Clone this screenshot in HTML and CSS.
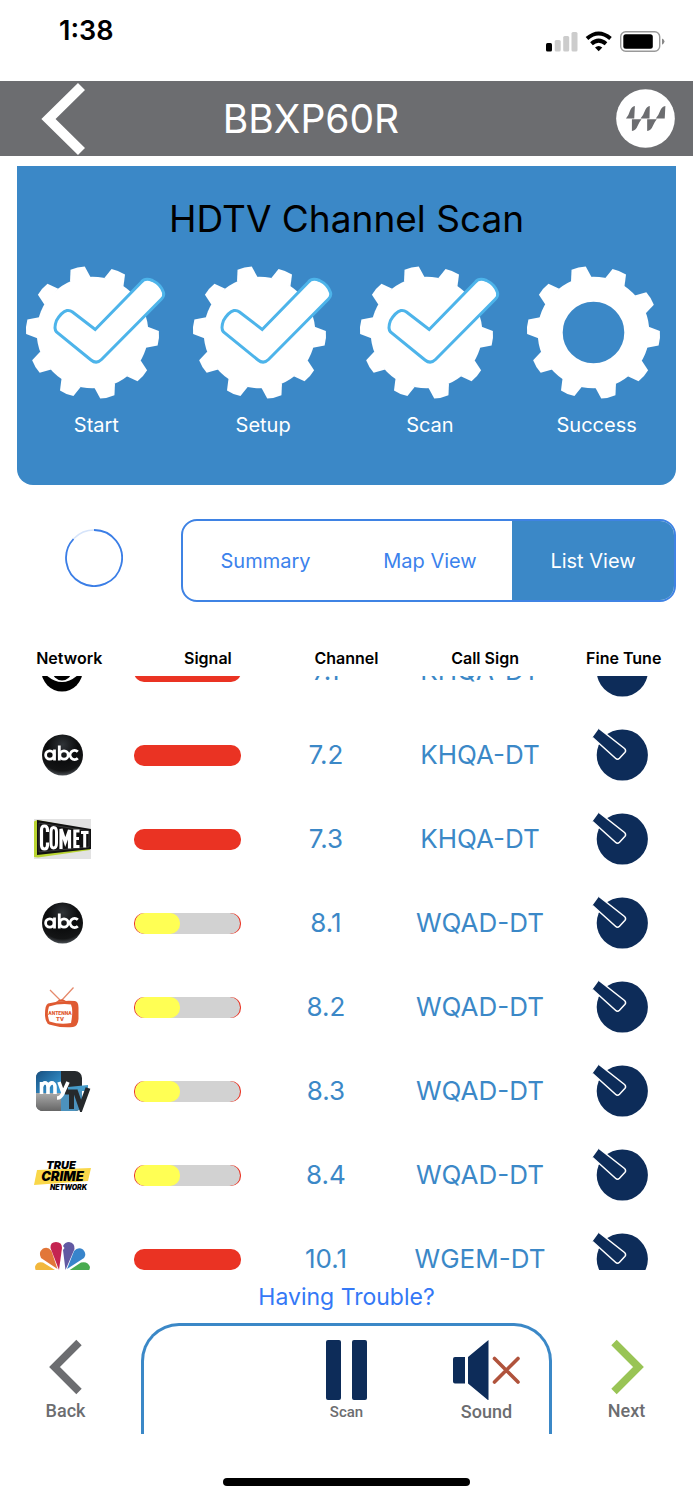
FILE: index.html
```html
<!DOCTYPE html>
<html lang="en">
<head>
<meta charset="utf-8">
<meta name="viewport" content="width=device-width, initial-scale=1">
<title>HDTV Channel Scan</title>
<link rel="stylesheet" href="styles.css">
</head>
<body>
<svg class="defs" aria-hidden="true">
  <defs>
    <path id="tooth" d="M-10.5 -54.5 L-7.300 -66 Q0 -67.400 7.300 -66 L10.5 -54.5Z"/>
    <g id="teeth" fill="#fff">
      <use href="#tooth" transform="rotate(-13)"/><use href="#tooth" transform="rotate(23)"/>
      <use href="#tooth" transform="rotate(59)"/><use href="#tooth" transform="rotate(95)"/>
      <use href="#tooth" transform="rotate(131)"/><use href="#tooth" transform="rotate(167)"/>
      <use href="#tooth" transform="rotate(203)"/><use href="#tooth" transform="rotate(239)"/>
      <use href="#tooth" transform="rotate(275)"/><use href="#tooth" transform="rotate(311)"/>
    </g>
    <symbol id="gear-open" viewBox="-70.500 -69.500 148 140">
      <use href="#teeth"/><circle r="43.300" fill="none" stroke="#fff" stroke-width="25"/>
    </symbol>
    <symbol id="gear-done" viewBox="-70.500 -69.500 148 140">
      <use href="#teeth"/><circle r="55.800" fill="#fff"/>
      <path d="M2.7 -3 L49 -50.5 Q52.500 -55 60 -52 Q68.500 -48 71 -40 Q72 -36.500 69 -33.500 L9 27 Q4 32 -1.500 27.500 L-36 -.500 Q-39 -4 -36 -12 Q-31 -20.500 -25.500 -22 Q-22.500 -22.500 -20 -20.500Z" fill="#fff" stroke="#4db4ea" stroke-width="3"/>
    </symbol>
    <symbol id="knob" viewBox="0 0 56 54">
      <circle cx="30.300" cy="27" r="25.600" fill="#0d2c59"/>
      <path d="M7 .500 L32.500 20.500 Q34.500 22.500 32.800 24.500 L27.500 30.300 Q25.500 32.300 23.500 30.300 L.500 9.500Z" fill="#0d2c59"/>
      <path d="M7 .500 L32.500 20.500 Q34.500 22.500 32.800 24.500 L27.500 30.300 Q25.500 32.300 23.500 30.300 L.500 9.500" fill="none" stroke="#fff" stroke-width="1.500"/>
    </symbol>
    <radialGradient id="ball" cx=".5" cy=".25" r=".75"><stop offset="0" stop-color="#303438"/><stop offset=".5" stop-color="#0b0c0d"/><stop offset=".85" stop-color="#141516"/><stop offset="1" stop-color="#4a4f54"/></radialGradient>
    <symbol id="abc" viewBox="0 0 60 42">
      <circle cx="30.500" cy="21" r="20.500" fill="url(#ball)"/>
      <g fill="none" stroke="#fff" stroke-width="2.800">
        <circle cx="17.800" cy="21" r="4.200"/><path d="M22.500 15.500V26.500M27.300 11.500V26.500M45.800 17.800A4.500 4.500 0 1 0 45.800 24.200"/><circle cx="32" cy="21" r="4.200"/>
      </g>
    </symbol>
    <linearGradient id="blue" x1="0" x2="1" y1="0" y2="1"><stop stop-color="#174f80"/><stop offset="1" stop-color="#3ba0dc"/></linearGradient>
    <linearGradient id="grey" x1="0" x2="0" y1="0" y2="1"><stop stop-color="#aaa"/><stop offset="1" stop-color="#666"/></linearGradient>
  </defs>
</svg>

<div class="app">
  <div class="status">
    <time class="clock">1:38</time>
    <svg class="status-icons" viewBox="546 30 120 24" aria-hidden="true">
      <rect x="546" y="43" width="6" height="8.500" rx="1.500"/>
      <g fill="#ccc"><rect x="554.700" y="40" width="6" height="11.500" rx="1.500"/><rect x="563.200" y="36" width="6" height="15.500" rx="1.500"/><rect x="571.500" y="32" width="6" height="19.500" rx="1.500"/></g>
      <g fill="none" stroke="#000" stroke-width="4"><path d="M587 38.500Q598.500 28.500 610.500 38.500"/><path d="M591.500 43.800Q598.500 37.500 606 43.800"/></g>
      <path d="M595 47.500Q598.700 44.500 602.300 47.500L598.700 51.200Z"/>
      <rect x="620.700" y="31.700" width="39" height="19.600" rx="5" fill="none" stroke="#999" stroke-width="1.400"/>
      <rect x="623.300" y="34.300" width="29.500" height="14.400" rx="2.500"/>
      <path d="M662 38.500Q664.500 39.500 664.500 41.600T662 44.800Z" fill="#888"/>
    </svg>
  </div>

  <header class="bar">
    <button class="bar-back" aria-label="Back"><svg viewBox="0 0 44 74" aria-hidden="true"><path d="M40.500 4.500L7.500 37L40.500 69.500" fill="none" stroke="#fff" stroke-width="10"/></svg></button>
    <h1>BBXP60R</h1>
    <svg class="brand" viewBox="811 265 178 178" role="img" aria-label="Logo">
      <circle cx="900" cy="354" r="88.500" fill="#fff"/>
      <g fill="#6c6d70">
        <path d="M841 354Q849 345 853 331Q858 317 868 316L866 354ZM885 354Q893 345 898 331Q903 317 913 316L912 354ZM931 354Q939 345 944 331Q949 317 960 316L958 354Z"/>
        <path d="M859 356H888Q881 364 876 377Q871 391 859 392ZM905 356H934Q927 364 922 377Q917 391 905 392Z"/>
      </g>
    </svg>
  </header>

  <main>
    <section class="card">
      <h2>HDTV Channel Scan</h2>
      <ol class="steps">
        <li><svg aria-hidden="true"><use href="#gear-done"/></svg><span>Start</span></li>
        <li><svg aria-hidden="true"><use href="#gear-done"/></svg><span>Setup</span></li>
        <li><svg aria-hidden="true"><use href="#gear-done"/></svg><span>Scan</span></li>
        <li><svg aria-hidden="true"><use href="#gear-open"/></svg><span>Success</span></li>
      </ol>
    </section>

    <section class="views">
      <svg class="spinner" viewBox="-29 -29 58 58" role="img" aria-label="Scanning">
        <circle r="28" fill="none" stroke="#d6e4fa" stroke-width="1.600"/>
        <path d="M0 -28A28 28 0 1 1 -20.500 -19" fill="none" stroke="#3b7ee6" stroke-width="1.800"/>
      </svg>
      <div class="tabs">
        <button>Summary</button><button>Map View</button><button class="active" aria-pressed="true">List View</button>
      </div>
    </section>

    <table class="channels">
      <thead><tr><th>Network</th><th>Signal</th><th>Channel</th><th>Call Sign</th><th>Fine Tune</th></tr></thead>
      <tbody>
        <tr>
          <td><svg class="logo" viewBox="0 0 60 42" role="img" aria-label="CBS"><circle cx="30" cy="21" r="20.500"/><path d="M10 21Q30 -1 50 21Q30 43 10 21Z" fill="#fff"/><circle cx="30" cy="21" r="9.500"/></svg></td>
          <td><div class="signal strong" role="img" aria-label="Strong signal"></div></td>
          <td>7.1</td><td>KHQA-DT</td>
          <td><button class="tune" aria-label="Fine tune 7.1"><svg><use href="#knob"/></svg></button></td>
        </tr>
        <tr>
          <td><svg class="logo" role="img" aria-label="ABC"><use href="#abc"/></svg></td>
          <td><div class="signal strong" role="img" aria-label="Strong signal"></div></td>
          <td>7.2</td><td>KHQA-DT</td>
          <td><button class="tune" aria-label="Fine tune 7.2"><svg><use href="#knob"/></svg></button></td>
        </tr>
        <tr>
          <td><svg class="logo" viewBox="0 0 60 42" role="img" aria-label="Comet"><path d="M2 1H59V41H2Z" fill="#e2e2e2"/><path d="M2 3.500L5 2L58 12V32L6 39.500L2 39Z" fill="#b9d431"/><path d="M5 2L59 11V31L5 37Z" fill="#111"/><path d="M7 5L57 13V29L7 34Z" fill="none" stroke="#555" stroke-width=".6"/>
            <g fill="none" stroke="#fff" stroke-width="3.200"><path d="M15.500 14V12Q15.500 8 12.300 8Q9.500 8 9.500 12V27Q9.500 31 12.500 31Q15.500 31 15.500 27V24.500"/><path d="M21.500 9.500Q24.500 9.500 24.500 14V25Q24.500 30 21.500 30Q19 30 19 25V14Q19 9.500 21.500 9.500Z" stroke-width="3"/><path d="M29 31V11L33.300 24L37.500 12V30.500" stroke-width="3.200"/><path d="M47.500 13H42.800V28.500H47.500M42.800 20.500H47" stroke-width="3"/><path d="M49 14.500H56.500M52.700 14.500V29.500" stroke-width="3"/></g></svg></td>
          <td><div class="signal strong" role="img" aria-label="Strong signal"></div></td>
          <td>7.3</td><td>KHQA-DT</td>
          <td><button class="tune" aria-label="Fine tune 7.3"><svg><use href="#knob"/></svg></button></td>
        </tr>
        <tr>
          <td><svg class="logo" role="img" aria-label="ABC"><use href="#abc"/></svg></td>
          <td><div class="signal" role="img" aria-label="Weak signal"><div class="track"><div class="level"></div></div></div></td>
          <td>8.1</td><td>WQAD-DT</td>
          <td><button class="tune" aria-label="Fine tune 8.1"><svg><use href="#knob"/></svg></button></td>
        </tr>
        <tr>
          <td><svg class="logo" viewBox="0 0 60 42" role="img" aria-label="Antenna TV"><path d="M28 14L18 4M30 14L41.500 1.500" stroke="#e58a6c" stroke-width="1.300"/><path d="M24 16Q29 11 34 15Z" fill="#df5a32"/><path d="M16 17.500Q29 14 43 15Q46.500 15.500 46.500 22V33Q46 40 41 41Q28 42 17 38.500Q13 36 13 28Q13 19 16 17.500Z" fill="#df5a32"/><path d="M17 20.500Q28 17 39 18.500Q41.500 24 39 37Q28 39 17.500 35.500Q14.500 28 17 20.500Z" fill="#fff"/><text x="28" y="28.500" class="ant">ANTENNA</text><text x="28" y="34.500" class="ant tv">TV</text></svg></td>
          <td><div class="signal" role="img" aria-label="Weak signal"><div class="track"><div class="level"></div></div></div></td>
          <td>8.2</td><td>WQAD-DT</td>
          <td><button class="tune" aria-label="Fine tune 8.2"><svg><use href="#knob"/></svg></button></td>
        </tr>
        <tr>
          <td><svg class="logo" viewBox="0 0 60 42" role="img" aria-label="My TV"><rect x="4" y="1" width="46" height="40" rx="7" fill="#262a2d"/><path d="M29 1H11Q4 1 4 8V23H29Z" fill="url(#blue)"/><path d="M4 23H29V41H11Q4 41 4 34Z" fill="url(#grey)"/><path d="M29 20H50V34Q50 41 43 41H29Z" fill="#4c92bd"/><path d="M36 17L56 15V21H36Z" fill="#469bc9"/><path d="M33 22H45M39.500 22V39M43 20L49 37L56 18" fill="none" stroke="#25292c" stroke-width="5"/><path d="M9.500 24V12M9.500 17Q11 12 14 13Q16 14 16 17V24M16 17Q18 12 21 13Q23 14 23 17V24M27 12L31 23M36 12L31 23Q29 28 25 28" fill="none" stroke="#fff" stroke-width="3.600"/></svg></td>
          <td><div class="signal" role="img" aria-label="Weak signal"><div class="track"><div class="level"></div></div></div></td>
          <td>8.3</td><td>WQAD-DT</td>
          <td><button class="tune" aria-label="Fine tune 8.3"><svg><use href="#knob"/></svg></button></td>
        </tr>
        <tr>
          <td><svg class="logo" viewBox="0 0 60 42" role="img" aria-label="True Crime Network"><path d="M5 16L59 14L56 27L2 31Z" fill="#f9d749"/><text x="29" y="15" class="crime small">TRUE</text><text x="30.500" y="27" class="crime">CRIME</text><text x="36.500" y="35.500" class="crime tiny">NETWORK</text></svg></td>
          <td><div class="signal" role="img" aria-label="Weak signal"><div class="track"><div class="level"></div></div></div></td>
          <td>8.4</td><td>WQAD-DT</td>
          <td><button class="tune" aria-label="Fine tune 8.4"><svg><use href="#knob"/></svg></button></td>
        </tr>
        <tr>
          <td><svg class="logo" viewBox="0 0 60 42" role="img" aria-label="NBC"><path d="M27 34.500H8Q3 34.500 3 28.500Q5 23 11 24.500Z" fill="#f2b73c"/><path d="M25.500 31L9 20Q6 14.500 11 10.500Q16 8 19.500 13Z" fill="#e27639"/><path d="M27 32L18.500 10Q18 4 24 4Q30 4 30 10Z" fill="#c42451"/><path d="M33.500 32L31 12L32.500 10L31 8Q33 4 37 4Q43 5 42.500 11Z" fill="#6259a2"/><path d="M35 31L42 13Q46 8.500 51 11.500Q55 16 52 20Z" fill="#3884cb"/><path d="M34 34.500L49 24.500Q56 23 58 29Q57.500 34.500 53 34.500Z" fill="#49ab50"/></svg></td>
          <td><div class="signal strong" role="img" aria-label="Strong signal"></div></td>
          <td>10.1</td><td>WGEM-DT</td>
          <td><button class="tune" aria-label="Fine tune 10.1"><svg><use href="#knob"/></svg></button></td>
        </tr>
      </tbody>
    </table>
    <a class="trouble" href="#">Having Trouble?</a>
  </main>

  <footer class="controls">
    <button class="nav back"><svg viewBox="0 0 34 56" width="34" height="56" aria-hidden="true"><path d="M30 3.500L5.500 28L30 52.500" fill="none" stroke="#6c6d70" stroke-width="7.600"/></svg>Back</button>
    <div class="panel">
      <button class="scan"><svg viewBox="0 0 42 60" width="42" height="60" aria-hidden="true"><path d="M2 0H13Q15 0 15 2V58Q15 60 13 60H2Q0 60 0 58V2Q0 0 2 0ZM28 0H39Q41 0 41 2V58Q41 60 39 60H28Q26 60 26 58V2Q26 0 28 0Z" fill="#0d2c59"/></svg>Scan</button>
      <button class="sound"><svg viewBox="0 0 68 60" width="68" height="60" aria-hidden="true"><path d="M2 17H12V43.500H2Q0 43.500 0 41.500V19Q0 17 2 17ZM15 17L35.500 0V60.500L15 43.500Z" fill="#0d2c59"/><path d="M41.500 18.500L65 42M65 18.500L41.500 42" stroke="#b0533c" stroke-width="3.600" stroke-linecap="round"/></svg>Sound</button>
    </div>
    <button class="nav next"><svg viewBox="0 0 34 56" width="34" height="56" aria-hidden="true"><path d="M4 3.500L28.500 28L4 52.500" fill="none" stroke="#99c455" stroke-width="7.600"/></svg>Next</button>
  </footer>
  <div class="home"></div>
</div>
</body>
</html>
```
FILE: styles.css
```css
* { box-sizing: border-box; }
body { margin: 0; background: #fff; color: #000; font-family: Inter, "Liberation Sans", sans-serif; }
button { border: 0; padding: 0; background: none; color: inherit; font: inherit; cursor: pointer; }
svg { display: block; }
.defs { position: absolute; width: 0; height: 0; }

.status { display: flex; justify-content: space-between; align-items: flex-start; height: 81px; padding: 15px 27px 0 59px; }
.clock { font-size: 27px; line-height: 32px; font-weight: 600; }
.status-icons { width: 120px; height: 24px; margin-top: 15px; }

.bar { display: grid; grid-template-columns: 1fr auto 1fr; align-items: center; height: 75px; padding: 0 18px 0 41px; background: #6c6d70; color: #fff; }
.bar h1 { margin: 0; padding-right: 94px; font-size: 39px; line-height: 48px; font-weight: 400; }
.bar-back svg { width: 44px; height: 74px; }
.brand { width: 59px; height: 59px; justify-self: end; }

.card { margin: 10px 17px 0; padding: 29px 0 48px; border-radius: 0 0 16px 16px; background: #3b88c7; }
.card h2 { margin: 0; font-size: 37px; line-height: 48px; font-weight: 400; text-align: center; }
.steps { display: grid; grid-template-columns: repeat(4, 1fr); margin: 20px -4px 0; padding: 0; list-style: none; }
.steps li { display: flex; flex-direction: column; align-items: center; gap: 10px; color: #fff; font-size: 20px; line-height: 24px; }
.steps svg { width: 148px; height: 140px; }

.views { display: flex; align-items: center; justify-content: space-between; padding: 34px 17px 0 65px; }
.spinner { width: 58px; height: 58px; margin-bottom: 6px; }
.tabs { display: grid; grid-template-columns: 166fr 165fr 163fr; flex: 0 1 495px; height: 83px; border: 2px solid #3f83e4; border-radius: 16px; overflow: hidden; color: #3b82ec; font-size: 20px; line-height: 24px; }
.tabs .active { background: #3b88c7; color: #fff; }

.channels { display: block; margin-top: 44px; }
.channels thead, .channels tbody { display: block; }
.channels thead tr { display: grid; grid-template-columns: repeat(5, 1fr); }
.channels th { padding: 0; font-size: 16px; line-height: 24px; font-weight: 600; }
.channels tbody { height: 594px; margin-top: 6px; overflow: hidden; }
.channels tbody tr { display: grid; grid-template-columns: 124fr 127fr 150fr 158fr 122fr; align-items: center; height: 84px; padding-right: 12px; color: #3b88c7; font-size: 26px; line-height: 32px; }
.channels tbody tr:first-child { margin-top: -47px; }
.channels td { display: grid; justify-content: center; padding: 0; }
.logo { width: 60px; height: 42px; }
.tune svg { width: 56px; height: 54px; }
.signal { width: 107px; height: 21px; border-radius: 10px; background: #ea3323; }
.track { height: 21px; margin: 0 1px; border-radius: 12px; background: #d2d2d2; }
.level { width: 45px; height: 21px; border-radius: 10px; background: #ffff54; }
.ant { font: 900 5px Roboto, sans-serif; fill: #df5a32; text-anchor: middle; }
.ant.tv { font-size: 6px; }
.crime { font: italic 900 13px Inter, sans-serif; text-anchor: middle; }
.crime.small { font-size: 11px; }
.crime.tiny { font-size: 7px; }

.trouble { display: block; width: fit-content; margin: 11px auto 0; color: #3478f6; font-size: 23px; line-height: 32px; text-decoration: none; }

.controls { display: grid; grid-template-columns: 141fr 411fr 141fr; height: 111px; margin-top: 10px; color: #6c6d70; font: 500 18px/24px Roboto, sans-serif; }
.controls button { display: flex; flex-direction: column; align-items: center; gap: 0; }
.controls .nav { gap: 4px; padding-top: 16px; }
.controls .back { padding-right: 10px; }
.controls .next { padding-left: 8px; }
.panel { display: grid; grid-template-columns: repeat(3, 1fr); padding-top: 14px; border: 3px solid #3b88c7; border-bottom: 0; border-radius: 38px 38px 0 0; }
.panel .scan { grid-column: 2; font-size: 15px; }
.panel .sound { padding-left: 10px; }
.home { width: 247px; height: 8px; margin: 44px auto 13px; border-radius: 4px; background: #000; }
```
